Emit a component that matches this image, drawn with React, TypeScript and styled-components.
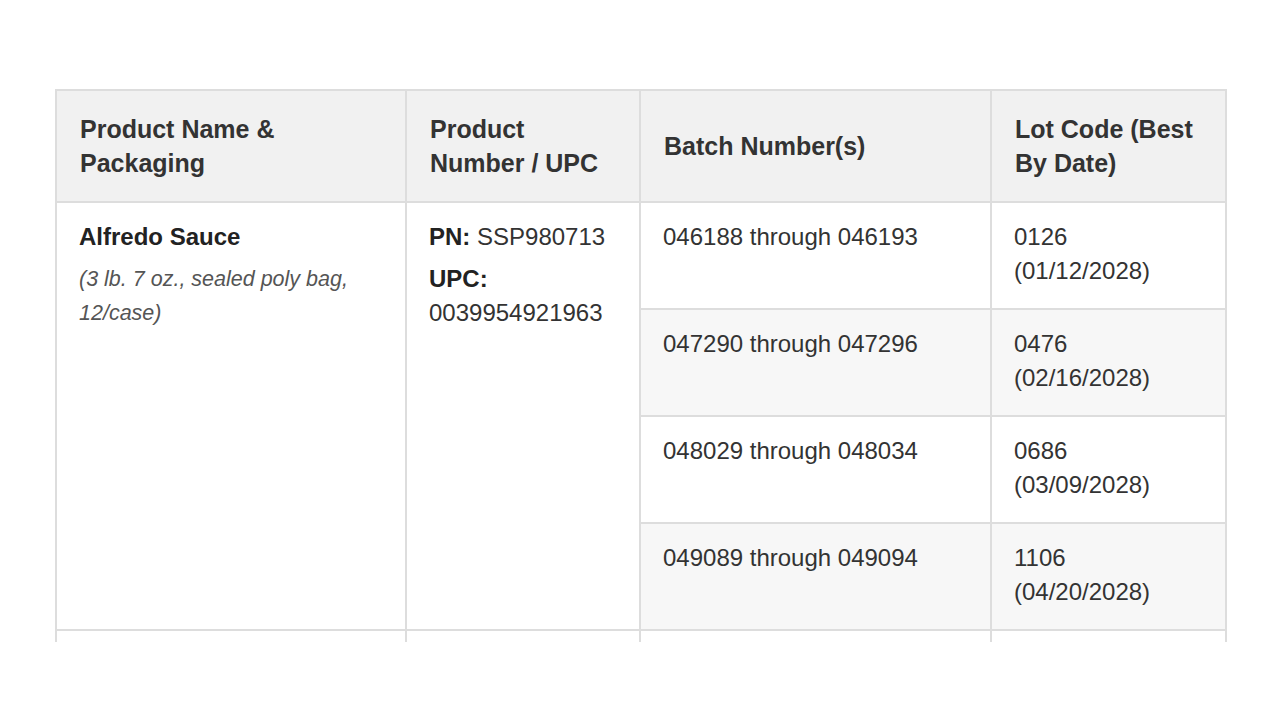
import React from 'react';
import styled, { createGlobalStyle } from 'styled-components';

const GlobalStyle = createGlobalStyle`
  html, body {
    margin: 0;
    padding: 0;
    background: #ffffff;
    font-family: "Liberation Sans", Arial, Helvetica, sans-serif;
    color: #333333;
  }
`;

/** Page frame: the table is cut off at the bottom of the visible area */
const Page = styled.div`
  width: 1280px;
  height: 725px;
  padding: 89px 0 0 55px;
  box-sizing: border-box;
`;

const Clip = styled.div`
  width: 1172px;
  height: 553px;
  overflow: hidden;
`;

const Table = styled.table`
  width: 1170px;
  border-collapse: collapse;
  table-layout: fixed;
  border: 2px solid #dddddd;
  font-size: 24px;
  line-height: 34px;
`;

const Col = styled.col<{ $width: number }>`
  width: ${({ $width }) => $width}px;
`;

const HeadCell = styled.th`
  background: #f1f1f1;
  border: 2px solid #dddddd;
  padding: 21px 23px;
  text-align: left;
  vertical-align: middle;
  font-size: 25px;
  font-weight: 700;
  color: #333333;
`;

const Cell = styled.td<{ $striped?: boolean }>`
  background: ${({ $striped }) => ($striped ? '#f7f7f7' : '#ffffff')};
  border: 2px solid #dddddd;
  padding: 17px 22px 20px;
  vertical-align: top;
  color: #333333;
`;

const ProductName = styled.div`
  font-weight: 700;
  color: #222222;
`;

const Packaging = styled.div`
  margin-top: 8px;
  font-size: 21.5px;
  font-style: italic;
  color: #555555;
`;

const CodeLine = styled.div<{ $gap?: boolean }>`
  margin-top: ${({ $gap }) => ($gap ? '8px' : '0')};
`;

const Label = styled.strong`
  font-weight: 700;
  color: #222222;
`;

type Batch = { range: string; lot: string; date: string };

const batches: Batch[] = [
  { range: '046188 through 046193', lot: '0126', date: '(01/12/2028)' },
  { range: '047290 through 047296', lot: '0476', date: '(02/16/2028)' },
  { range: '048029 through 048034', lot: '0686', date: '(03/09/2028)' },
  { range: '049089 through 049094', lot: '1106', date: '(04/20/2028)' },
];

export default function App() {
  return (
    <>
      <GlobalStyle />
      <Page>
        <Clip>
          <Table>
            <colgroup>
              <Col $width={350} />
              <Col $width={234} />
              <Col $width={351} />
              <Col $width={235} />
            </colgroup>
            <thead>
              <tr>
                <HeadCell>Product Name &amp; Packaging</HeadCell>
                <HeadCell>Product Number / UPC</HeadCell>
                <HeadCell>Batch Number(s)</HeadCell>
                <HeadCell>Lot Code (Best By Date)</HeadCell>
              </tr>
            </thead>
            <tbody>
              {batches.map((b, i) => (
                <tr key={b.range}>
                  {i === 0 && (
                    <>
                      <Cell rowSpan={batches.length}>
                        <ProductName>Alfredo Sauce</ProductName>
                        <Packaging>(3 lb. 7 oz., sealed poly bag, 12/case)</Packaging>
                      </Cell>
                      <Cell rowSpan={batches.length}>
                        <CodeLine>
                          <Label>PN:</Label> SSP980713
                        </CodeLine>
                        <CodeLine $gap>
                          <Label>UPC:</Label> 0039954921963
                        </CodeLine>
                      </Cell>
                    </>
                  )}
                  <Cell $striped={i % 2 === 1}>{b.range}</Cell>
                  <Cell $striped={i % 2 === 1}>
                    {b.lot} {b.date}
                  </Cell>
                </tr>
              ))}
              {/* next product row, only its top edge is visible */}
              <tr>
                <Cell>&nbsp;</Cell>
                <Cell>&nbsp;</Cell>
                <Cell>&nbsp;</Cell>
                <Cell>&nbsp;</Cell>
              </tr>
            </tbody>
          </Table>
        </Clip>
      </Page>
    </>
  );
}
